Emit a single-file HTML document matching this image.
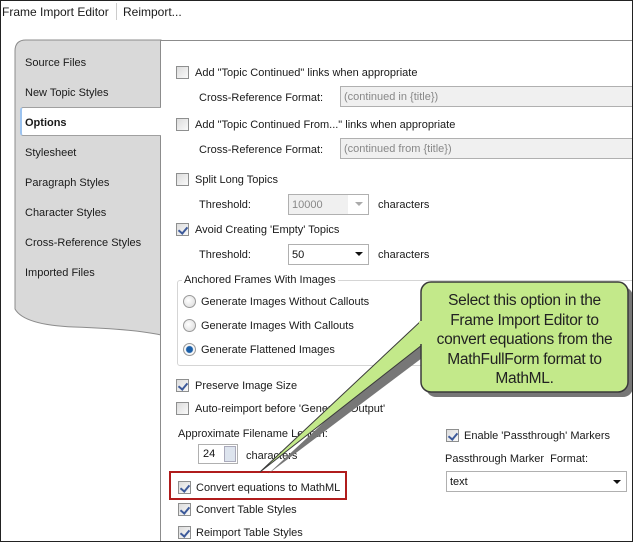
<!DOCTYPE html>
<html><head><style>
*{box-sizing:border-box}
body{margin:0;width:633px;height:542px;overflow:hidden;font-family:"Liberation Sans",sans-serif;font-size:11px;color:#1a1a1a;background:#fff;position:relative}
.a{position:absolute;white-space:nowrap}
.cb{position:absolute;width:13px;height:13px;border:1px solid #8e8f8f;background:linear-gradient(135deg,#dcdcdc,#fafafa)}
.cb.k::after{content:"";position:absolute;left:3px;top:1px;width:4px;height:7px;border:solid #3d5a9a;border-width:0 2px 2px 0;transform:rotate(40deg)}
.rd{position:absolute;width:13px;height:13px;border-radius:50%;border:1px solid #999;background:radial-gradient(circle at 40% 40%,#fff,#d8d8d8)}
.in{position:absolute;border:1px solid #b0b0b0;background:#f0f0f0;color:#888;padding:4px 3px;height:21px}
.tab{position:absolute;left:25px}
</style></head><body>
<div style="position:absolute;inset:0;border:1px solid #222;pointer-events:none;z-index:9"></div>
<div class="a" style="left:2px;top:5px;font-size:12px">Frame Import Editor</div>
<div class="a" style="left:116px;top:3px;width:1px;height:17px;background:#ccc"></div>
<div class="a" style="left:123px;top:5px;font-size:12px">Reimport...</div>
<svg class="a" style="left:14px;top:39px" width="148" height="300"><path d="M1 12 Q1 1 12 1 H147 V296 Q120 290 60 288 Q10 286 1 270 Z" fill="#d9d9d9" stroke="#8c8c8c"/></svg>
<div class="a" style="left:160px;top:40px;width:473px;height:502px;background:#fff;border-left:1px solid #8c8c8c;border-top:1px solid #8c8c8c"></div>
<div class="a" style="left:20px;top:107px;width:141px;height:29px;background:#fff;border:1px solid #a0a0a0;border-right:none;border-radius:3px 0 0 3px;border-left:2px solid #9cc3ef"></div>
<div class="a tab" style="top:57px">Source Files</div>
<div class="a tab" style="top:87px">New Topic Styles</div>
<div class="a tab" style="top:117px;font-weight:bold">Options</div>
<div class="a tab" style="top:147px">Stylesheet</div>
<div class="a tab" style="top:177px">Paragraph Styles</div>
<div class="a tab" style="top:207px">Character Styles</div>
<div class="a tab" style="top:237px">Cross-Reference Styles</div>
<div class="a tab" style="top:267px">Imported Files</div>
<div class="cb" style="left:176px;top:66px"></div><div class="a" style="left:195px;top:67px">Add "Topic Continued" links when appropriate</div>
<div class="a" style="left:199px;top:92px">Cross-Reference Format:</div>
<div class="in" style="left:340px;top:86px;width:300px">(continued in {title})</div>
<div class="cb" style="left:176px;top:118px"></div><div class="a" style="left:195px;top:119px">Add "Topic Continued From..." links when appropriate</div>
<div class="a" style="left:199px;top:144px">Cross-Reference Format:</div>
<div class="in" style="left:340px;top:138px;width:300px">(continued from {title})</div>
<div class="cb" style="left:176px;top:173px"></div><div class="a" style="left:195px;top:174px">Split Long Topics</div>
<div class="a" style="left:199px;top:199px">Threshold:</div>
<div class="in" style="left:288px;top:194px;width:81px;background:linear-gradient(90deg,#f0f0f0 75%,#fff 75%)">10000<span style="position:absolute;right:5px;top:7px;border:4px solid transparent;border-top:4px solid #aaa"></span></div>
<div class="a" style="left:378px;top:199px">characters</div>
<div class="cb k" style="left:176px;top:223px"></div><div class="a" style="left:195px;top:224px">Avoid Creating 'Empty' Topics</div>
<div class="a" style="left:199px;top:249px">Threshold:</div>
<div class="in" style="left:288px;top:244px;width:81px;background:#fff;color:#111">50<span style="position:absolute;right:5px;top:7px;border:4px solid transparent;border-top:4px solid #111"></span></div>
<div class="a" style="left:378px;top:249px">characters</div>
<div class="a" style="left:177px;top:280px;width:460px;height:86px;border:1px solid #d5d5d5;border-radius:3px"></div>
<div class="a" style="left:182px;top:274px;background:#fff;padding:0 2px">Anchored Frames With Images</div>
<div class="rd" style="left:183px;top:295px"></div><div class="a" style="left:201px;top:296px">Generate Images Without Callouts</div>
<div class="rd" style="left:183px;top:319px"></div><div class="a" style="left:201px;top:320px">Generate Images With Callouts</div>
<div class="rd" style="left:183px;top:343px;background:radial-gradient(circle,#1b5fa8 3px,#fff 4px,#d8d8d8)"></div><div class="a" style="left:201px;top:344px">Generate Flattened Images</div>
<div class="cb k" style="left:176px;top:379px"></div><div class="a" style="left:195px;top:380px">Preserve Image Size</div>
<div class="cb" style="left:176px;top:402px"></div><div class="a" style="left:195px;top:403px">Auto-reimport before 'Generate Output'</div>
<div class="a" style="left:178px;top:428px">Approximate Filename Length:</div>
<div class="in" style="left:198px;top:444px;width:40px;height:20px;background:#fff;color:#111;padding:3px 4px">24<span style="position:absolute;right:1px;top:1px;width:12px;height:16px;background:#dde4ee;border:1px solid #aab"></span></div>
<div class="a" style="left:246px;top:450px">characters</div>
<div class="a" style="left:169px;top:471px;width:178px;height:29px;border:2px solid #b01c1c"></div>
<div class="cb k" style="left:178px;top:481px"></div><div class="a" style="left:196px;top:482px">Convert equations to MathML</div>
<div class="cb k" style="left:178px;top:503px"></div><div class="a" style="left:196px;top:504px">Convert Table Styles</div>
<div class="cb k" style="left:178px;top:526px"></div><div class="a" style="left:196px;top:527px">Reimport Table Styles</div>
<div class="cb k" style="left:446px;top:429px"></div><div class="a" style="left:464px;top:430px">Enable 'Passthrough' Markers</div>
<div class="a" style="left:445px;top:453px">Passthrough Marker&nbsp; Format:</div>
<div class="in" style="left:446px;top:471px;width:181px;background:#fff;color:#111;padding:4px 3px">text<span style="position:absolute;right:5px;top:8px;border:4px solid transparent;border-top:4px solid #111"></span></div>
<svg class="a" style="left:0;top:0" width="633" height="542">
<path d="M428 326 L268 474 L430 352 Z" fill="#777"/>
<rect x="426" y="287" width="207" height="110" rx="10" fill="#777"/>
<path d="M422 320 L260 472 L422 345 Z" fill="#c3e98a" stroke="#3a3a3a" stroke-width="1"/>
<rect x="421" y="282" width="207" height="110" rx="10" fill="#c3e98a" stroke="#3a3a3a" stroke-width="1.5"/>
<rect x="419" y="321" width="5" height="23" fill="#c3e98a"/>
</svg>
<div class="a" style="left:421px;top:291px;width:207px;text-align:center;font-size:15.5px;line-height:19.5px;color:#222;letter-spacing:-0.3px">Select this option in the<br>Frame Import Editor to<br>convert equations from the<br>MathFullForm format to<br>MathML.</div>
</body></html>
